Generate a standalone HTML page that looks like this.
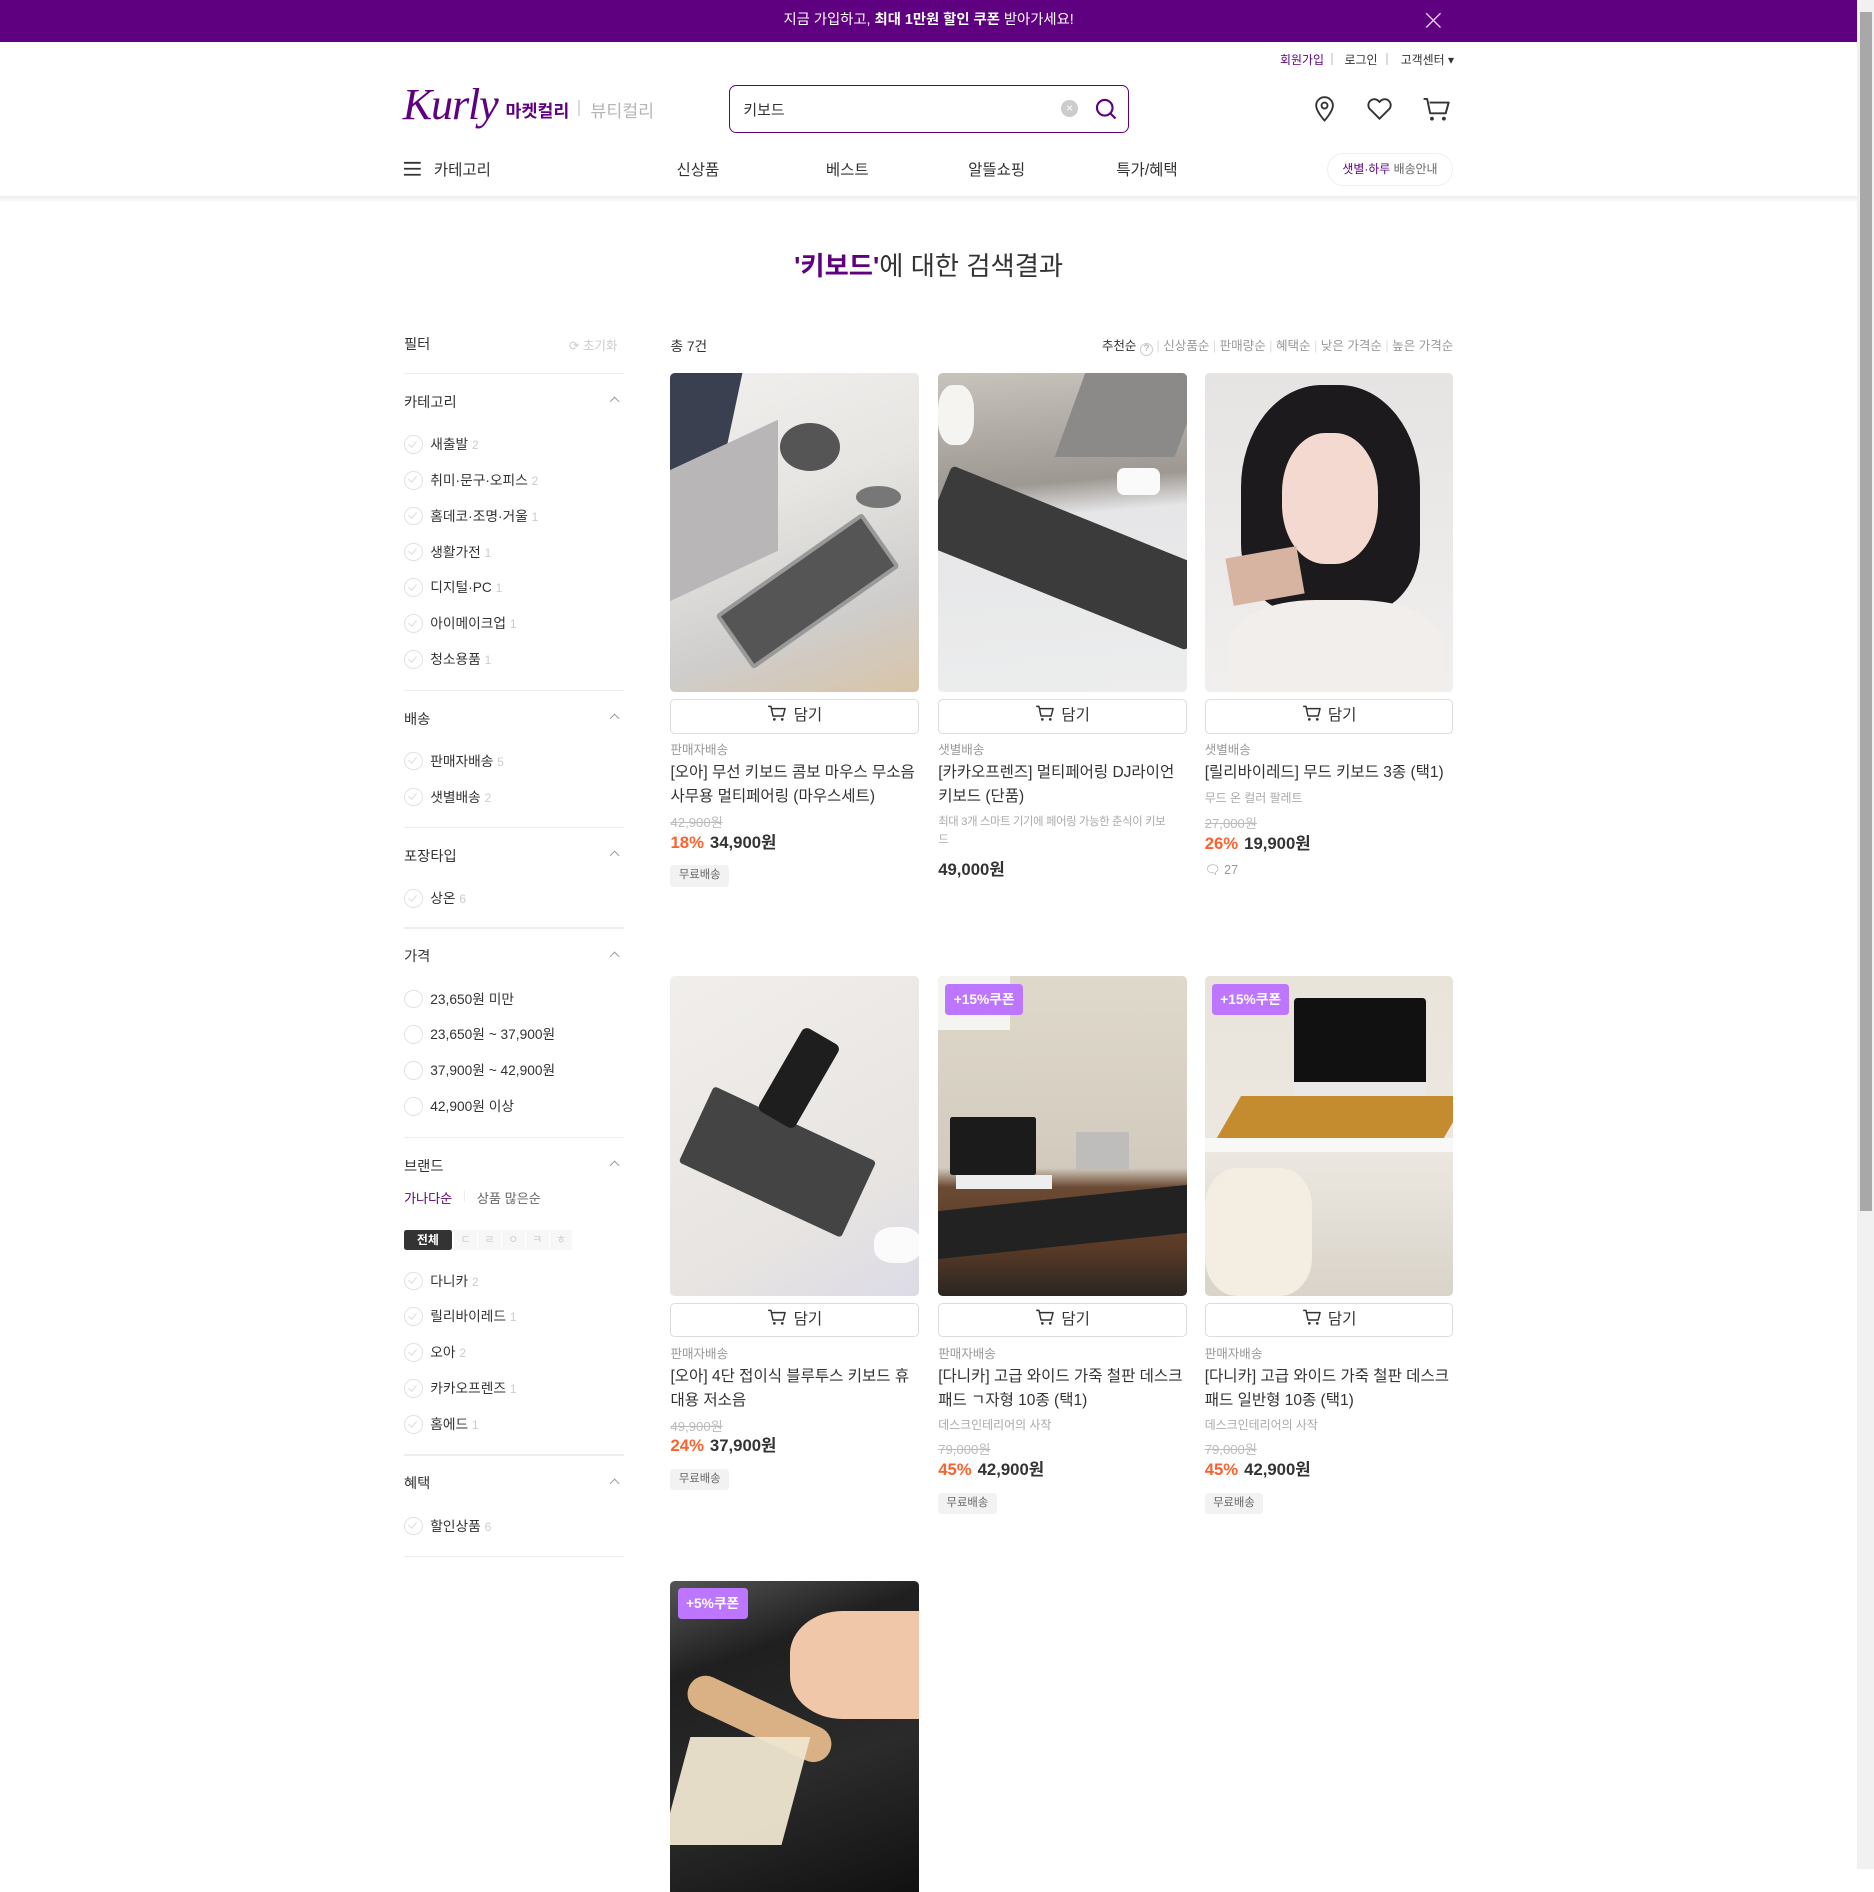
<!DOCTYPE html>
<html><head><meta charset="utf-8">
<style>
html{zoom:1.19515;}
*{box-sizing:border-box;margin:0;padding:0}
body{width:1568px;height:1564px;overflow:hidden;position:relative;background:#fff;font-family:"Liberation Sans","Noto Sans CJK KR",sans-serif;color:#333}
.a{position:absolute}
.banner{left:0;top:0;width:1554px;height:35px;background:#5f0080;color:#fff;font-size:12px;text-align:center;line-height:35px}
.scroll{left:1554px;top:0;width:14px;height:1564px;background:#f1f1f1}
.thumb{left:1556px;top:10px;width:10px;height:1003px;background:#a8a8a8}
.top{font-size:10px;color:#333;top:43px}
.hdr-shadow{left:0;top:164px;width:1554px;height:6px;background:linear-gradient(#eee,#fff)}
.nav{top:132px;font-size:13px;color:#333}
.line{left:338px;width:184px;height:1px;background:#eee}
.sec{font-size:12px;color:#333}
.chev{width:6px;height:6px;border-left:1.2px solid #999;border-top:1.2px solid #999;transform:rotate(45deg)}
.item{font-size:11.5px;color:#333;height:16px;line-height:16px;padding-left:22px}
.item:before{content:"";position:absolute;left:0;top:0;width:14px;height:14px;border:1px solid #e2e2e2;border-radius:50%}
.item.ck:after{content:"";position:absolute;left:5px;top:3px;width:3px;height:6px;border-right:1px solid #ddd;border-bottom:1px solid #ddd;transform:rotate(40deg)}
.item span{color:#ccc;font-size:10px}
.card{width:208px}
.img{width:208px;height:267px;border-radius:4px;overflow:hidden;position:relative}
.btn{margin-top:6px;height:29px;border:1px solid #ddd;border-radius:4px;text-align:center;font-size:13px;line-height:27px;color:#333}
.btn svg{vertical-align:-3px;margin-right:5px}
.lbl{margin-top:7px;font-size:10.5px;line-height:14px;color:#999}
.tt{margin-top:2px;font-size:13px;line-height:20px;color:#333}
.sub{font-size:10px;line-height:15px;color:#aaa}
.op{font-size:11px;line-height:14px;color:#bbb;text-decoration:line-through}
.pr{font-size:14px;line-height:18px;font-weight:bold;color:#333}
.pr b{color:#fa622f;margin-right:5px}
.chip{display:inline-block;background:#f2f2f2;border-radius:3px;font-size:9.5px;color:#666;padding:0 7px;height:18px;line-height:18px}
.cpn{position:absolute;background:#bd76ff;color:#fff;font-size:11.5px;font-weight:bold;padding:0 7px;height:26px;line-height:26px;border-radius:3px}
</style></head><body>
<div class="a banner">지금 가입하고, <b>최대 1만원 할인 쿠폰</b> 받아가세요!</div>
<svg class="a" style="left:1192px;top:10px" width="14" height="14" viewBox="0 0 14 14"><path d="M1 1L13 13M13 1L1 13" stroke="#fff" stroke-width="1.2" opacity=".8"/></svg>
<div class="a scroll"></div><div class="a thumb"></div>

<div class="a top" style="left:1071px;color:#5f0080">회원가입</div>
<div class="a" style="left:1114px;top:44px;width:1px;height:10px;background:#ddd"></div>
<div class="a top" style="left:1125px">로그인</div>
<div class="a" style="left:1160px;top:44px;width:1px;height:10px;background:#ddd"></div>
<div class="a top" style="left:1172px">고객센터 ▾</div>

<div class="a" style="left:337px;top:66px;font-family:'Liberation Serif',serif;font-style:italic;font-size:37px;color:#5f0080;letter-spacing:-1px">Kurly</div>
<div class="a" style="left:423px;top:81px;font-size:14.5px;color:#5f0080;font-weight:bold">마켓컬리</div>
<div class="a" style="left:484px;top:84px;width:1px;height:13px;background:#ddd"></div>
<div class="a" style="left:494px;top:81px;font-size:14.5px;color:#b5b5b5">뷰티컬리</div>

<div class="a" style="left:610px;top:71px;width:335px;height:40px;border:1px solid #5f0080;border-radius:6px"></div>
<div class="a" style="left:622px;top:83px;font-size:12.5px;color:#333">키보드</div>
<div class="a" style="left:888px;top:84px;width:14px;height:14px;border-radius:50%;background:#ccc;color:#fff;font-size:10px;text-align:center;line-height:14px">×</div>
<svg class="a" style="left:915px;top:81px" width="20" height="20" viewBox="0 0 20 20"><circle cx="9" cy="9" r="6.5" fill="none" stroke="#5f0080" stroke-width="1.8"/><path d="M14 14l4 4" stroke="#5f0080" stroke-width="1.8"/></svg>

<svg class="a" style="left:1095px;top:78px" width="26" height="26" viewBox="0 0 26 26"><path d="M13 23s-7-7.5-7-12.5a7 7 0 0114 0C20 15.5 13 23 13 23z" fill="none" stroke="#333" stroke-width="1.6"/><circle cx="13" cy="10.5" r="2.5" fill="none" stroke="#333" stroke-width="1.6"/></svg>
<svg class="a" style="left:1141px;top:78px" width="26" height="26" viewBox="0 0 26 26"><path d="M13 21.5L4.5 13a5 5 0 017.5-6.5l1 1 1-1A5 5 0 0121.5 13z" fill="none" stroke="#333" stroke-width="1.6"/></svg>
<svg class="a" style="left:1188px;top:78px" width="28" height="28" viewBox="0 0 28 28"><path d="M3 5h3l2.5 12h13l2.5-9H8" fill="none" stroke="#333" stroke-width="1.6" stroke-linejoin="round"/><circle cx="10" cy="21.5" r="1.6" fill="#333"/><circle cx="20" cy="21.5" r="1.6" fill="#333"/></svg>

<svg class="a" style="left:338px;top:135px" width="14" height="13" viewBox="0 0 14 13"><path d="M0 1.5h14M0 6.5h14M0 11.5h14" stroke="#333" stroke-width="1.5"/></svg>
<div class="a nav" style="left:363px">카테고리</div>
<div class="a nav" style="left:566px">신상품</div>
<div class="a nav" style="left:691px">베스트</div>
<div class="a nav" style="left:810px">알뜰쇼핑</div>
<div class="a nav" style="left:934px">특가/혜택</div>
<div class="a" style="left:1110px;top:128px;width:106px;height:28px;border:1px solid #eee;border-radius:14px;font-size:10px;line-height:26px;text-align:center;color:#666"><span style="color:#5f0080">샛별·하루</span> 배송안내</div>
<div class="a hdr-shadow"></div>

<div class="a" style="left:0;width:1554px;top:205px;text-align:center;font-size:22px;color:#333"><span style="color:#5f0080;font-weight:bold">'키보드'</span>에 대한 검색결과</div>

<div class="a sec" style="left:338px;top:279px">필터</div>
<div class="a" style="left:476px;top:280px;font-size:10.5px;color:#ccc">⟳ 초기화</div>
<div class="a line" style="top:312px"></div>
<div class="a sec" style="left:338px;top:327px">카테고리</div><div class="a chev" style="left:511px;top:333px"></div>
<div class="a item ck" style="left:338px;top:364px">새출발 <span>2</span></div>
<div class="a item ck" style="left:338px;top:394px">취미·문구·오피스 <span>2</span></div>
<div class="a item ck" style="left:338px;top:424px">홈데코·조명·거울 <span>1</span></div>
<div class="a item ck" style="left:338px;top:454px">생활가전 <span>1</span></div>
<div class="a item ck" style="left:338px;top:484px">디지털·PC <span>1</span></div>
<div class="a item ck" style="left:338px;top:514px">아이메이크업 <span>1</span></div>
<div class="a item ck" style="left:338px;top:544px">청소용품 <span>1</span></div>
<div class="a line" style="top:577px"></div>
<div class="a sec" style="left:338px;top:592px">배송</div><div class="a chev" style="left:511px;top:598px"></div>
<div class="a item ck" style="left:338px;top:629px">판매자배송 <span>5</span></div>
<div class="a item ck" style="left:338px;top:659px">샛별배송 <span>2</span></div>
<div class="a line" style="top:692px"></div>
<div class="a sec" style="left:338px;top:707px">포장타입</div><div class="a chev" style="left:511px;top:713px"></div>
<div class="a item ck" style="left:338px;top:744px">상온 <span>6</span></div>
<div class="a line" style="top:776px"></div>
<div class="a sec" style="left:338px;top:791px">가격</div><div class="a chev" style="left:511px;top:797px"></div>
<div class="a item" style="left:338px;top:828px">23,650원 미만</div>
<div class="a item" style="left:338px;top:858px">23,650원 ~ 37,900원</div>
<div class="a item" style="left:338px;top:888px">37,900원 ~ 42,900원</div>
<div class="a item" style="left:338px;top:918px">42,900원 이상</div>
<div class="a line" style="top:951px"></div>
<div class="a sec" style="left:338px;top:966px">브랜드</div><div class="a chev" style="left:511px;top:972px"></div>
<div class="a" style="left:338px;top:994px;font-size:11px;color:#5f0080">가나다순</div>
<div class="a" style="left:388px;top:996px;width:1px;height:10px;background:#eee"></div>
<div class="a" style="left:399px;top:994px;font-size:11px;color:#666">상품 많은순</div>
<div class="a" style="left:338px;top:1029px;width:40px;height:17px;background:#333;border-radius:2px;color:#fff;font-size:10px;font-weight:bold;text-align:center;line-height:17px">전체</div>
<div class="a" style="left:380px;top:1029px;font-size:9px;color:#ccc;line-height:17px">
<span style="display:inline-block;width:19px;background:#f7f7f7;text-align:center;margin-right:1px">ㄷ</span><span style="display:inline-block;width:19px;background:#f7f7f7;text-align:center;margin-right:1px">ㄹ</span><span style="display:inline-block;width:19px;background:#f7f7f7;text-align:center;margin-right:1px">ㅇ</span><span style="display:inline-block;width:19px;background:#f7f7f7;text-align:center;margin-right:1px">ㅋ</span><span style="display:inline-block;width:19px;background:#f7f7f7;text-align:center">ㅎ</span></div>
<div class="a item ck" style="left:338px;top:1064px">다니카 <span>2</span></div>
<div class="a item ck" style="left:338px;top:1094px">릴리바이레드 <span>1</span></div>
<div class="a item ck" style="left:338px;top:1124px">오아 <span>2</span></div>
<div class="a item ck" style="left:338px;top:1154px">카카오프렌즈 <span>1</span></div>
<div class="a item ck" style="left:338px;top:1184px">홈에드 <span>1</span></div>
<div class="a line" style="top:1217px"></div>
<div class="a sec" style="left:338px;top:1232px">혜택</div><div class="a chev" style="left:511px;top:1238px"></div>
<div class="a item ck" style="left:338px;top:1269px">할인상품 <span>6</span></div>
<div class="a line" style="top:1302px"></div>

<div class="a sec" style="left:561px;top:280px;font-size:11.5px">총 7건</div>
<div class="a" style="left:0;width:1216px;top:280px;text-align:right;font-size:10.5px;color:#999">
<span style="color:#333">추천순</span> <span style="display:inline-block;width:11px;height:11px;border:1px solid #ccc;border-radius:50%;font-size:8px;line-height:9px;text-align:center;vertical-align:-1px">?</span> <span style="color:#ddd">|</span> 신상품순 <span style="color:#ddd">|</span> 판매량순 <span style="color:#ddd">|</span> 혜택순 <span style="color:#ddd">|</span> 낮은 가격순 <span style="color:#ddd">|</span> 높은 가격순</div>

<svg width="0" height="0" style="position:absolute"><defs><symbol id="cart" viewBox="0 0 18 18"><path d="M1 3h2.5l1.8 8.5h9l1.7-6.5H4.5" fill="none" stroke="#333" stroke-width="1.3" stroke-linejoin="round"/><circle cx="6.5" cy="14.5" r="1.2" fill="#333"/><circle cx="13.5" cy="14.5" r="1.2" fill="#333"/></symbol></defs></svg>

<div class="a card" style="left:561px;top:312px">
<div class="img" style="background:linear-gradient(160deg,#f2f0ee 0%,#e7e5e2 40%,#cfcdcb 75%,#d8c4a8 100%)">
<div class="a" style="left:-10px;top:-10px;width:60px;height:110px;background:#3a4050;transform:skewX(-12deg)"></div>
<div class="a" style="left:0;top:60px;width:90px;height:110px;background:#b8b6b6;transform:skewY(-25deg)"></div>
<div class="a" style="left:40px;top:155px;width:150px;height:55px;background:#555;border:4px solid #999;transform:rotate(-35deg);border-radius:3px"></div>
<div class="a" style="left:92px;top:42px;width:50px;height:40px;background:#555;border-radius:50%"></div>
<div class="a" style="left:155px;top:95px;width:38px;height:18px;background:#777;border-radius:50%"></div>
</div>
<div class="btn"><svg width="17" height="17"><use href="#cart"/></svg>담기</div>
<div class="lbl">판매자배송</div>
<div class="tt">[오아] 무선 키보드 콤보 마우스 무소음<br>사무용 멀티페어링 (마우스세트)</div>
<div class="op" style="margin-top:5px">42,900원</div>
<div class="pr"><b>18%</b>34,900원</div>
<div class="chip" style="margin-top:10px">무료배송</div>
</div>

<div class="a card" style="left:785px;top:312px">
<div class="img" style="background:linear-gradient(175deg,#c8c3bc 0%,#9d9892 35%,#e6e6e8 45%,#eceded 100%)">
<div class="a" style="left:110px;top:0;width:100px;height:70px;background:#8c8a88;transform:skewX(-20deg)"></div>
<div class="a" style="left:0;top:10px;width:30px;height:50px;background:#f6f4f0;border-radius:40%"></div>
<div class="a" style="left:-10px;top:120px;width:240px;height:70px;background:#3b3b3c;transform:rotate(22deg);border-radius:4px"></div>
<div class="a" style="left:150px;top:80px;width:36px;height:22px;background:#fafafa;border-radius:6px"></div>
</div>
<div class="btn"><svg width="17" height="17"><use href="#cart"/></svg>담기</div>
<div class="lbl">샛별배송</div>
<div class="tt">[카카오프렌즈] 멀티페어링 DJ라이언<br>키보드 (단품)</div>
<div class="sub" style="margin-top:4px;font-size:9.5px;letter-spacing:-0.3px;white-space:nowrap">최대 3개 스마트 기기에 페어링 가능한 춘식이 키보<br>드</div>
<div class="pr" style="margin-top:8px">49,000원</div>
</div>

<div class="a card" style="left:1008px;top:312px">
<div class="img" style="background:linear-gradient(#e6e4e3,#f1efee)">
<div class="a" style="left:30px;top:10px;width:150px;height:190px;background:#1c1a1d;border-radius:45% 45% 30% 30%"></div>
<div class="a" style="left:65px;top:50px;width:80px;height:110px;background:#f3d9cf;border-radius:45%"></div>
<div class="a" style="left:20px;top:190px;width:180px;height:90px;background:#f2eeeb;border-radius:40% 40% 0 0"></div>
<div class="a" style="left:20px;top:150px;width:60px;height:40px;background:#d7b3a2;transform:rotate(-10deg)"></div>
</div>
<div class="btn"><svg width="17" height="17"><use href="#cart"/></svg>담기</div>
<div class="lbl">샛별배송</div>
<div class="tt">[릴리바이레드] 무드 키보드 3종 (택1)</div>
<div class="sub" style="margin-top:4px">무드 온 컬러 팔레트</div>
<div class="op" style="margin-top:7px">27,000원</div>
<div class="pr"><b>26%</b>19,900원</div>
<div style="margin-top:7px;font-size:10.5px;color:#999">🗨 27</div>
</div>

<div class="a card" style="left:561px;top:817px">
<div class="img" style="background:linear-gradient(150deg,#f1eeeb,#e7e4e1 70%,#dcdbe6)">
<div class="a" style="left:15px;top:120px;width:150px;height:70px;background:#444;transform:rotate(25deg);border-radius:3px"></div>
<div class="a" style="left:90px;top:45px;width:35px;height:80px;background:#1e1e1e;border-radius:5px;transform:rotate(30deg)"></div>
<div class="a" style="left:170px;top:210px;width:40px;height:30px;background:#fbfbfb;border-radius:40%"></div>
</div>
<div class="btn"><svg width="17" height="17"><use href="#cart"/></svg>담기</div>
<div class="lbl">판매자배송</div>
<div class="tt">[오아] 4단 접이식 블루투스 키보드 휴<br>대용 저소음</div>
<div class="op" style="margin-top:5px">49,900원</div>
<div class="pr"><b>24%</b>37,900원</div>
<div class="chip" style="margin-top:10px">무료배송</div>
</div>

<div class="a card" style="left:785px;top:817px">
<div class="img" style="background:linear-gradient(#dfd9cc 0%,#d2cbbd 60%,#6b4a34 66%,#5a3a26 85%,#2a2622 100%)">
<div class="a" style="left:0;top:0;width:60px;height:45px;background:#f4f4f0"></div>
<div class="a" style="left:0;top:185px;width:208px;height:40px;background:#222;transform:skewY(-6deg)"></div>
<div class="a" style="left:10px;top:118px;width:72px;height:48px;background:#1b1b1b;border-radius:2px"></div>
<div class="a" style="left:15px;top:166px;width:80px;height:12px;background:#eee"></div>
<div class="a" style="left:115px;top:130px;width:45px;height:32px;background:#bfbdbb"></div>
</div>
<div class="btn"><svg width="17" height="17"><use href="#cart"/></svg>담기</div>
<div class="lbl">판매자배송</div>
<div class="tt">[다니카] 고급 와이드 가죽 철판 데스크<br>패드 ㄱ자형 10종 (택1)</div>
<div class="sub" style="margin-top:4px">데스크인테리어의 사작</div>
<div class="op" style="margin-top:6px">79,000원</div>
<div class="pr"><b>45%</b>42,900원</div>
<div class="chip" style="margin-top:10px">무료배송</div>
</div>
<span class="cpn" style="left:791px;top:823px">+15%쿠폰</span>

<div class="a card" style="left:1008px;top:817px">
<div class="img" style="background:linear-gradient(#e9e4da,#ece8e1 55%,#d9d3c9)">
<div class="a" style="left:75px;top:18px;width:110px;height:80px;background:#111;border-radius:3px"></div>
<div class="a" style="left:75px;top:88px;width:110px;height:12px;background:#e9e9ea"></div>
<div class="a" style="left:20px;top:100px;width:190px;height:35px;background:#c58b2f;transform:skewX(-30deg)"></div>
<div class="a" style="left:0;top:135px;width:208px;height:12px;background:#f8f8f6"></div>
<div class="a" style="left:0;top:160px;width:90px;height:107px;background:#f3ede2;border-radius:30%"></div>
</div>
<div class="btn"><svg width="17" height="17"><use href="#cart"/></svg>담기</div>
<div class="lbl">판매자배송</div>
<div class="tt">[다니카] 고급 와이드 가죽 철판 데스크<br>패드 일반형 10종 (택1)</div>
<div class="sub" style="margin-top:4px">데스크인테리어의 사작</div>
<div class="op" style="margin-top:6px">79,000원</div>
<div class="pr"><b>45%</b>42,900원</div>
<div class="chip" style="margin-top:10px">무료배송</div>
</div>
<span class="cpn" style="left:1014px;top:823px">+15%쿠폰</span>

<div class="a card" style="left:561px;top:1323px">
<div class="img" style="height:260px;border-radius:4px 4px 0 0;background:linear-gradient(160deg,#555 0%,#1f1f1f 25%,#2b2b2b 60%,#111 100%)">
<div class="a" style="left:100px;top:25px;width:110px;height:90px;background:#f1c7aa;border-radius:40% 0 0 40%"></div>
<div class="a" style="left:10px;top:100px;width:130px;height:30px;background:#d9b184;border-radius:15px;transform:rotate(25deg)"></div>
<div class="a" style="left:5px;top:130px;width:100px;height:90px;background:#eee6cf;transform:skewX(-15deg);opacity:.95"></div>
</div>
</div>
<span class="cpn" style="left:567px;top:1329px">+5%쿠폰</span>
</body></html>
